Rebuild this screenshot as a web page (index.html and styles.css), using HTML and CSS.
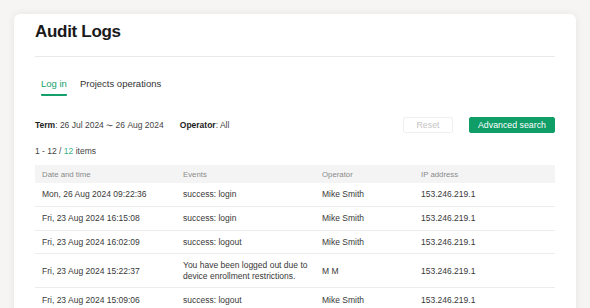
FILE: index.html
```html
<!DOCTYPE html>
<html lang="en">
<head>
<meta charset="utf-8">
<title>Audit Logs</title>
<link rel="stylesheet" href="styles.css">
</head>
<body>
<div class="card">
  <div class="page-head">
    <h1 class="title">Audit Logs</h1>
  </div>
  <div class="tabs">
    <div class="tab active">Log in</div>
    <div class="tab">Projects operations</div>
  </div>
  <div class="filters">
    <div class="filter"><b>Term</b>: 26 Jul 2024 <span class="wave">〜</span> 26 Aug 2024</div>
    <div class="filter op"><b>Operator</b>: All</div>
    <div class="actions">
      <button class="btn btn-reset">Reset</button>
      <button class="btn btn-primary">Advanced search</button>
    </div>
  </div>
  <div class="count">1 - 12 / <span class="green">12</span> items</div>
  <div class="table">
    <div class="row head">
      <div class="cell">Date and time</div>
      <div class="cell">Events</div>
      <div class="cell">Operator</div>
      <div class="cell">IP address</div>
    </div>
    <div class="row">
      <div class="cell">Mon, 26 Aug 2024 09:22:36</div>
      <div class="cell">success: login</div>
      <div class="cell">Mike Smith</div>
      <div class="cell">153.246.219.1</div>
    </div>
    <div class="row">
      <div class="cell">Fri, 23 Aug 2024 16:15:08</div>
      <div class="cell">success: login</div>
      <div class="cell">Mike Smith</div>
      <div class="cell">153.246.219.1</div>
    </div>
    <div class="row">
      <div class="cell">Fri, 23 Aug 2024 16:02:09</div>
      <div class="cell">success: logout</div>
      <div class="cell">Mike Smith</div>
      <div class="cell">153.246.219.1</div>
    </div>
    <div class="row tall">
      <div class="cell">Fri, 23 Aug 2024 15:22:37</div>
      <div class="cell wrap">You have been logged out due to device enrollment restrictions.</div>
      <div class="cell">M M</div>
      <div class="cell">153.246.219.1</div>
    </div>
    <div class="row">
      <div class="cell">Fri, 23 Aug 2024 15:09:06</div>
      <div class="cell">success: logout</div>
      <div class="cell">Mike Smith</div>
      <div class="cell">153.246.219.1</div>
    </div>
  </div>
</div>
</body>
</html>
```
FILE: styles.css
```css
* { box-sizing: border-box; }
html, body { margin: 0; padding: 0; }
body {
  background: #f6f5f3;
  font-family: "Liberation Sans", Arial, sans-serif;
  color: #333;
  padding: 14px 14px 0 14px;
  height: 308px;
  overflow: hidden;
}
.card {
  background: #fff;
  border-radius: 6px;
  box-shadow: 0 0 8px rgba(0,0,0,0.07);
  padding: 7px 21px 20px 21px;
  min-height: 320px;
}
.page-head {
  border-bottom: 1px solid #e8e8e8;
  padding-bottom: 13px;
}
.title {
  margin: 0;
  font-size: 17px;
  line-height: 22px;
  font-weight: 700;
  letter-spacing: -0.3px;
  color: #1a1a1a;
}
.tabs {
  display: flex;
  gap: 13px;
  padding-left: 6px;
  margin-top: 20px;
}
.tab {
  font-size: 9.5px;
  line-height: 14px;
  padding-bottom: 3px;
  border-bottom: 2.5px solid transparent;
  color: #333;
}
.tab.active {
  color: #14a06b;
  border-bottom-color: #14a06b;
  border-radius: 0 0 1px 1px;
}
.filters {
  display: flex;
  align-items: center;
  height: 16px;
  margin-top: 21px;
  font-size: 8.5px;
  color: #444;
}
.filter b { font-weight: 700; color: #222; }
.wave { font-size: 7px; }
.filter.op { margin-left: 16px; }
.actions {
  margin-left: auto;
  display: flex;
  gap: 16px;
}
.btn {
  font-family: inherit;
  height: 16px;
  border-radius: 2px;
  font-size: 8.8px;
  padding: 0;
  cursor: pointer;
}
.btn-reset {
  width: 50px;
  background: #fff;
  border: 1px solid #efefef;
  color: #c4c4c4;
}
.btn-primary {
  width: 86px;
  background: #0f9d68;
  border: 1px solid #0f9d68;
  color: #fff;
}
.count {
  margin-top: 12px;
  font-size: 8.5px;
  line-height: 12px;
  color: #444;
}
.green { color: #3db38a; }
.table { margin-top: 8px; }
.row {
  display: grid;
  grid-template-columns: 141px 139px 99px 1fr;
  border-bottom: 1px solid #ececec;
  align-items: center;
  height: 23.8px;
  font-size: 8.5px;
  color: #383838;
}
.row.head {
  background: #f4f4f4;
  height: 18px;
  border-bottom: none;
  font-size: 7.8px;
  color: #8a8a8a;
}
.row.tall { height: 34px; }
.cell { padding: 0 7px; white-space: nowrap; }
.cell.wrap { white-space: normal; line-height: 11px; }
```
